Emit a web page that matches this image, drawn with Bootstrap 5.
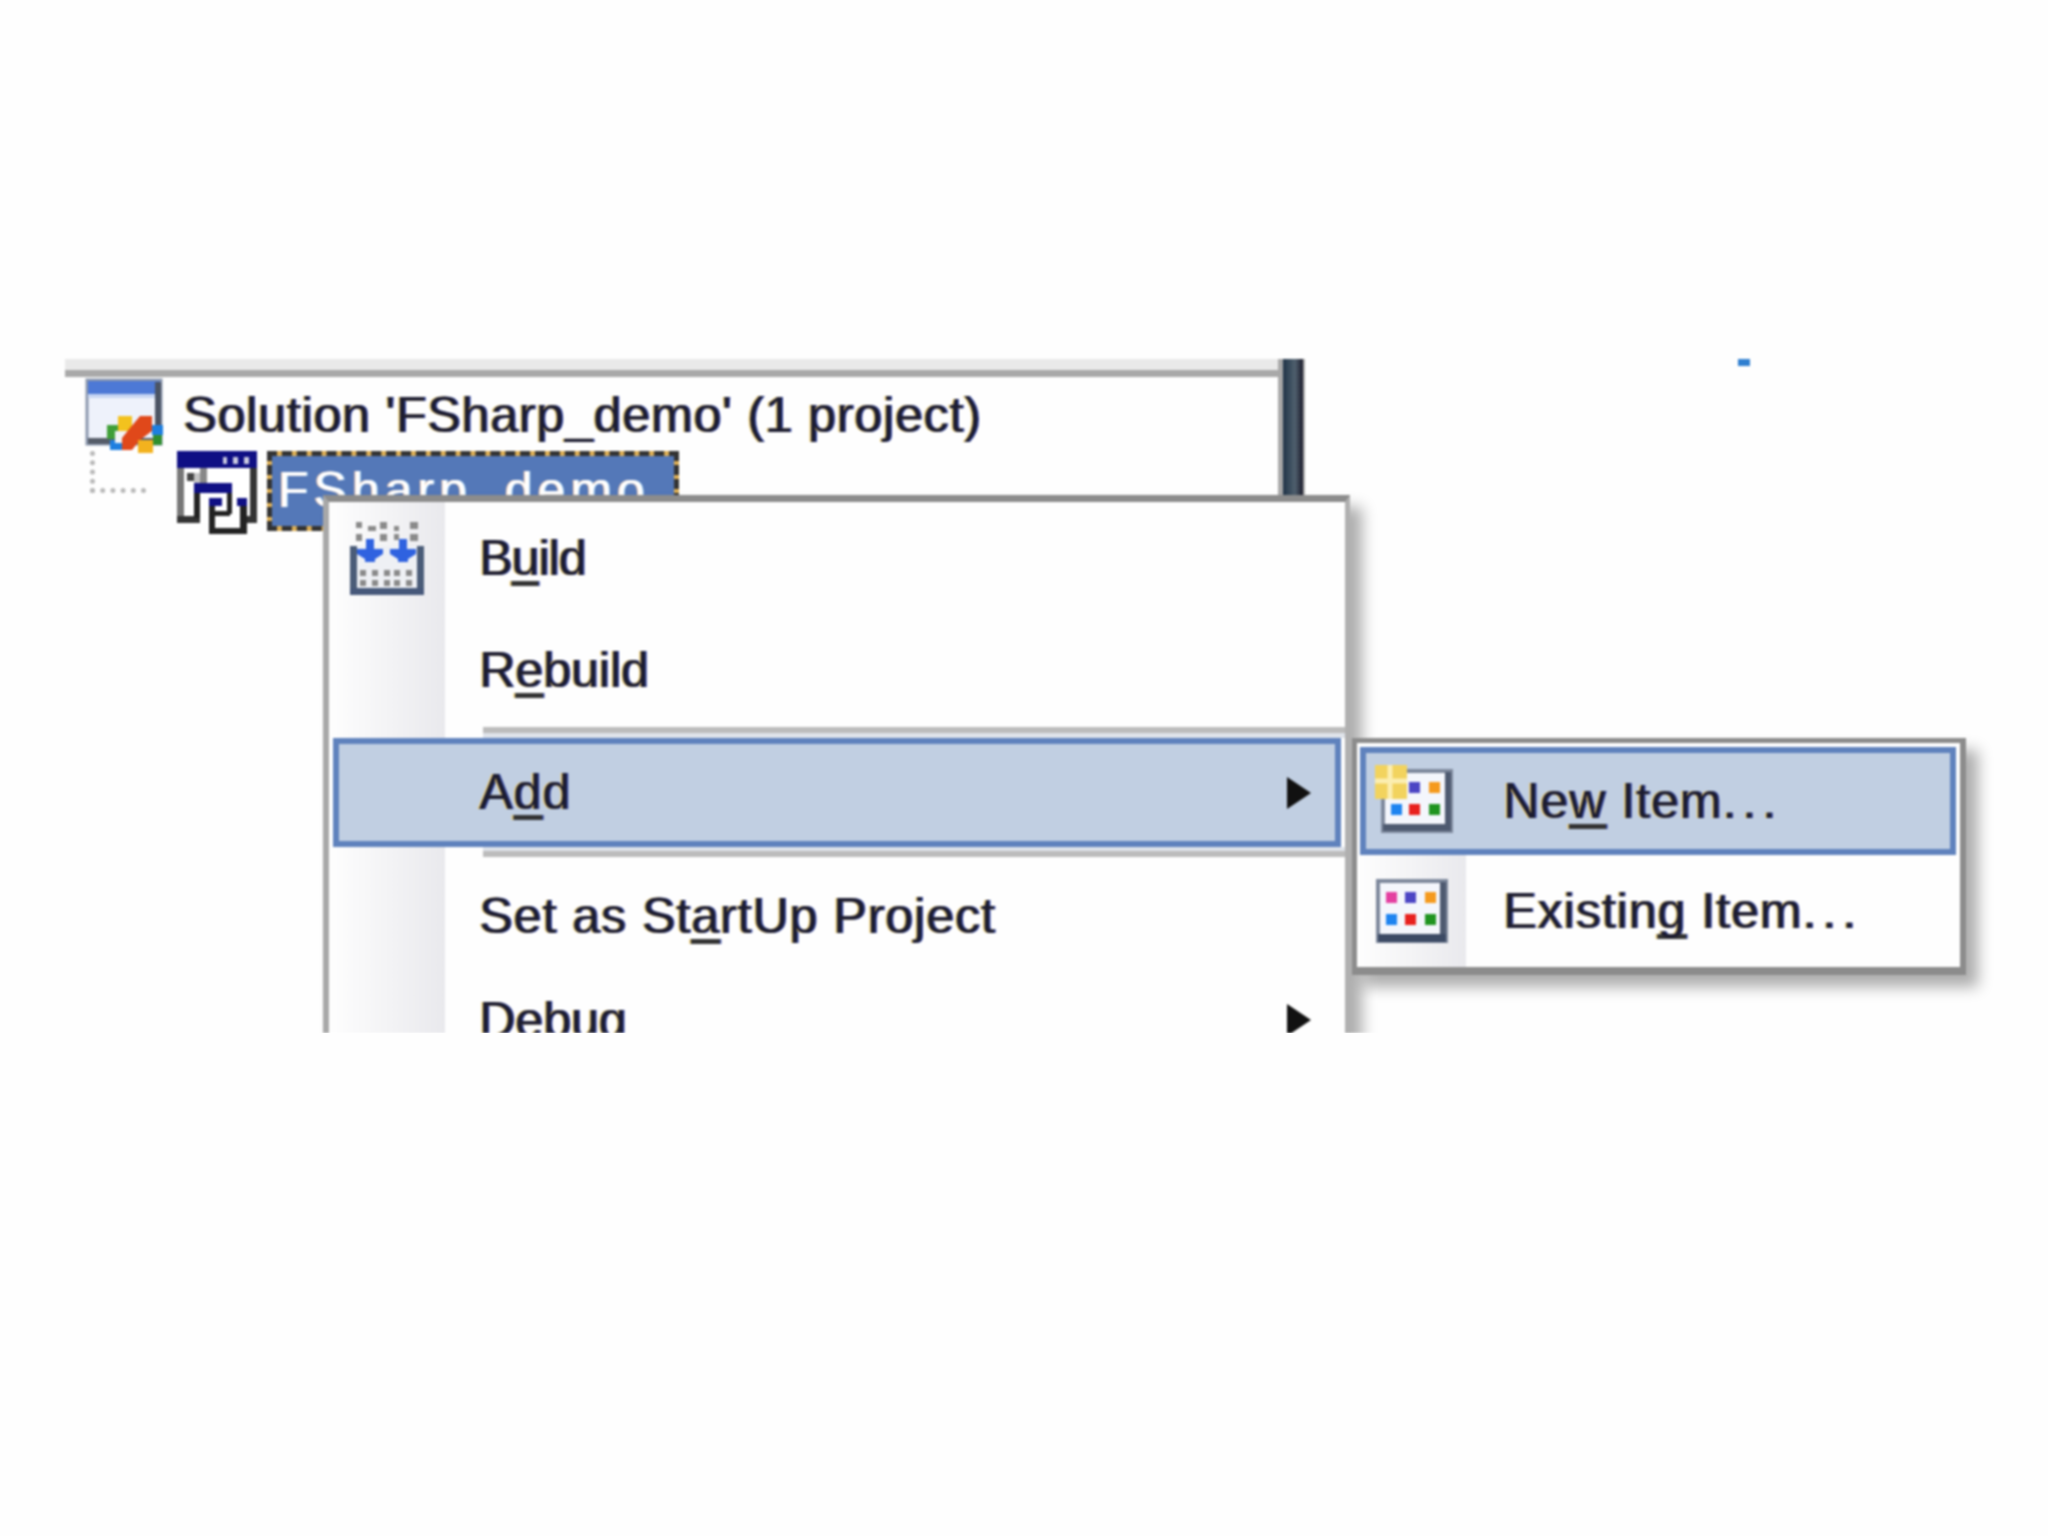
<!DOCTYPE html>
<html lang="en">
<head>
  <meta charset="UTF-8" />
  <title>Solution Explorer - Add New Item</title>
  <link href="https://cdn.jsdelivr.net/npm/bootstrap@5.3.0/dist/css/bootstrap.min.css" rel="stylesheet">
  <script src="https://cdn.jsdelivr.net/npm/bootstrap@5.3.0/dist/js/bootstrap.bundle.min.js"></script>
  <style>
    body {
      background-color: #fefefe;
      overflow: hidden;
    }
    .shot {
      position: relative;
      width: 2048px;
      height: 674px;
      margin-top: 359px;
      overflow: hidden;
      filter: blur(0.9px);
      font-family: "Liberation Sans", Arial, sans-serif;
      font-size: 50px;
      color: #1c1c30;
      text-shadow: -1.5px 0 #e8c76a, 1.5px 0 #2b3f9c;
    }
    .top-rule {
      width: 1213px;
      height: 18px;
      margin-left: 65px;
      background-color: #e9e9e9;
      border-bottom: 7px solid #a9a9a9;
    }
    .splitter {
      position: absolute;
      left: 1278px;
      top: 0;
      width: 27px;
      height: 140px;
      background: linear-gradient(90deg, #1f3347, #50606e 60%, #1a1a2a);
      border-left: 5px solid #a8a8a8;
      border-right: 2px solid #aaa;
    }
    .blue-dot {
      position: absolute;
      left: 1738px;
      top: 0;
      width: 12px;
      height: 7px;
      background-color: #2f7fd0;
    }
    .solution-row {
      padding-left: 85px;
      padding-top: 3px;
      gap: 20px;
      height: 74px;
      letter-spacing: 0.85px;
    }
    .project-row {
      padding-left: 90px;
      height: 90px;
    }
    .tree-line {
      width: 56px;
      height: 42px;
      margin-right: 31px;
      border-left: 5px dotted #b8b8b8;
      border-bottom: 5px dotted #b8b8b8;
    }
    .project-sel {
      width: 412px;
      height: 80px;
      margin-left: 10px;
      padding: 4px 6px;
      line-height: 60px;
      background: linear-gradient(#5478b8, #5478b8) padding-box, linear-gradient(#dcae55, #dcae55) border-box;
      border: 5px dashed #333;
      color: #fff;
      text-shadow: -1px 0 #f4c8a8, 1px 0 #a8d4f4;
      letter-spacing: 5px;
      white-space: nowrap;
    }
    .ctx-menu.dropdown-menu {
      --bs-dropdown-bg: #fefefe;
      --bs-dropdown-padding-y: 0;
      --bs-dropdown-border-width: 0;
      --bs-dropdown-border-radius: 0;
      --bs-dropdown-font-size: 50px;
      --bs-dropdown-color: #1c1c30;
      --bs-dropdown-min-width: 0;
      display: block;
      margin: 0;
      font-family: inherit;
      text-shadow: inherit;
      border-radius: 0;
      border-style: solid;
      border-color: #8c8c8c;
      box-shadow: 12px 12px 14px rgba(0, 0, 0, 0.32);
    }
    .main-menu {
      left: 323px;
      top: 136px;
      width: 1027px;
      height: 640px;
      border-width: 7px 5px 0 6px;
      border-color: #8c8c8c #b0b0b0 #8c8c8c #a8a8a8 !important;
    }
    .sub-menu {
      left: 1352px;
      top: 379px;
      width: 614px;
      height: 237px;
      border-width: 5px 6px 8px 5px;
      padding-top: 4px !important;
    }
    .menu-row {
      display: flex;
      align-items: center;
      width: auto;
      padding: 0;
      color: #1c1c30;
      background-color: transparent;
      white-space: nowrap;
      letter-spacing: 1px;
    }
    .menu-row:hover {
      color: #1c1c30;
      background-color: transparent;
    }
    .gutter {
      flex: 0 0 auto;
      display: flex;
      align-items: center;
      justify-content: center;
      align-self: stretch;
      background: linear-gradient(90deg, #fefefe, #e9e9ed);
    }
    .main-menu .gutter {
      width: 116px;
    }
    .sub-menu .gutter {
      width: 109px;
    }
    .main-menu .menu-label {
      padding-left: 34px;
      flex-grow: 1;
    }
    .sub-menu .menu-label {
      padding-left: 37px;
      flex-grow: 1;
    }
    .row-a { height: 112px; }
    .row-b { height: 113px; }
    .row-c { height: 118px; }
    .row-d { height: 90px; }
    .row-d .sub-arrow { margin-right: 34px; }
    .snug { letter-spacing: 0; }
    .snugger { letter-spacing: -1px; }
    .menu-row u {
      text-decoration-thickness: 5px;
      text-underline-offset: 6px;
      text-decoration-skip-ink: none;
      text-decoration-color: #333;
    }
    .is-hot {
      margin: 0 4px 0 4px;
      height: 109px;
      background-color: #c1cfe2;
      border: 6px solid #5f82bd;
    }
    .is-hot .gutter {
      background: none;
    }
    .main-menu .is-hot .gutter {
      width: 106px;
    }
    .sub-hot {
      margin: 0 4px 0 3px;
      height: 108px;
    }
    .sub-hot .gutter {
      width: 100px !important;
    }
    .sub-plain {
      height: 112px;
    }
    .menu-rule {
      margin-left: 38px;
    }
    .rule-over {
      height: 11px;
      background-color: #dfe3ea;
      border-top: 6px solid #bcbcbc;
    }
    .rule-under {
      height: 10px;
      background-color: #dfe3ea;
      border-bottom: 6px solid #bcbcbc;
    }
    .sub-arrow {
      flex: 0 0 auto;
      width: 0;
      height: 0;
      margin-right: 24px;
      border-style: solid;
      border-width: 16px 0 16px 24px;
      border-color: transparent transparent transparent #111;
    }
    .shot svg {
      display: block;
      flex: 0 0 auto;
      overflow: visible;
    }
    .ell {
      letter-spacing: 6px;
    }
  </style>
</head>
<body>
  <div class="shot">
    <div class="top-rule"></div>
    <div class="splitter"></div>
    <div class="blue-dot"></div>

    <!-- tree -->
    <div class="d-flex align-items-center solution-row">
      <svg width="78" height="76" viewBox="0 0 78 76">
        <rect x="2" y="2" width="74" height="64" fill="#eef2fb" stroke="#8b97ad" stroke-width="3"/>
        <rect x="3" y="3" width="72" height="14" fill="#4d79d6"/>
        <rect x="3" y="16" width="72" height="4" fill="#c7d6f2"/>
        <rect x="3" y="60" width="72" height="6" fill="#555c68"/>
        <rect x="70" y="4" width="6" height="60" fill="#4b5464"/>
        <rect x="22" y="47" width="12" height="14" fill="#3f9f38"/>
        <rect x="33" y="38" width="14" height="15" fill="#f3c21e"/>
        <rect x="25" y="62" width="12" height="10" fill="#1e7fe0"/>
        <rect x="30" y="53" width="10" height="12" fill="#f2f4f6"/>
        <path d="M55 38H67V53L55 62 47 72H37V60L45 50Z" fill="#e0481a"/>
        <rect x="53" y="62" width="15" height="13" fill="#f3b21e"/>
        <rect x="67" y="47" width="11" height="10" fill="#1e7fe0"/>
        <rect x="68" y="57" width="9" height="10" fill="#2f8f2f"/>
      </svg>
      <span class="text-nowrap">Solution 'FSharp_demo' (1 project)</span>
    </div>
    <div class="d-flex align-items-start project-row">
      <div class="tree-line"></div>
      <svg width="80" height="84" viewBox="0 0 80 84">
        <rect x="0" y="0" width="80" height="72" fill="#fff"/>
        <rect x="0" y="0" width="80" height="17" fill="#0f0f84"/>
        <rect x="46" y="6" width="4" height="7" fill="#c8c8e0"/>
        <rect x="56" y="6" width="5" height="7" fill="#c8c8e0"/>
        <rect x="67" y="6" width="5" height="7" fill="#c8c8e0"/>
        <rect x="0" y="17" width="7" height="55" fill="#777"/>
        <rect x="73" y="17" width="7" height="55" fill="#333"/>
        <rect x="0" y="65" width="23" height="7" fill="#333"/>
        <rect x="70" y="65" width="10" height="7" fill="#333"/>
        <rect x="10" y="22" width="7" height="8" fill="#444"/>
        <rect x="17" y="22" width="6" height="40" fill="#c4c4c4"/>
        <rect x="23" y="17" width="7" height="15" fill="#888"/>
        <rect x="17" y="32" width="6" height="35" fill="#222"/>
        <rect x="50" y="32" width="5" height="31" fill="#222"/>
        <rect x="17" y="32" width="38" height="10" fill="#0f0f84"/>
        <rect x="38" y="60" width="15" height="5" fill="#222"/>
        <rect x="32" y="47" width="6" height="36" fill="#222"/>
        <rect x="63" y="47" width="7" height="36" fill="#222"/>
        <rect x="32" y="77" width="38" height="6" fill="#222"/>
        <rect x="32" y="47" width="13" height="8" fill="#0f0f84"/>
        <rect x="60" y="47" width="10" height="8" fill="#0f0f84"/>
      </svg>
      <div class="project-sel">FSharp_demo</div>
    </div>

    <!-- context menu -->
    <div class="dropdown-menu show ctx-menu main-menu">
      <a class="dropdown-item menu-row row-a">
        <span class="gutter">
          <svg width="74" height="76" viewBox="0 0 74 76">
            <rect x="2" y="26" width="70" height="46" fill="#eef0f4"/>
            <rect x="0" y="26" width="7" height="48" fill="#4a5c78"/>
            <rect x="67" y="26" width="7" height="48" fill="#4a5c78"/>
            <rect x="0" y="68" width="74" height="7" fill="#46587a"/>
            <g fill="#8a8a8a">
              <rect x="6" y="2" width="6" height="6"/><rect x="18" y="6" width="8" height="5"/><rect x="30" y="2" width="7" height="7"/><rect x="44" y="6" width="5" height="5"/><rect x="60" y="2" width="8" height="7"/>
              <rect x="6" y="14" width="6" height="7"/><rect x="30" y="14" width="7" height="7"/><rect x="44" y="14" width="5" height="6"/><rect x="60" y="14" width="8" height="7"/>
              <rect x="10" y="50" width="6" height="6"/><rect x="22" y="50" width="6" height="6"/><rect x="34" y="50" width="6" height="6"/><rect x="44" y="50" width="6" height="6"/><rect x="56" y="50" width="6" height="6"/>
              <rect x="10" y="60" width="6" height="6"/><rect x="22" y="60" width="6" height="6"/><rect x="34" y="60" width="6" height="6"/><rect x="44" y="60" width="6" height="6"/><rect x="56" y="60" width="6" height="6"/>
            </g>
            <path d="M16 19h8v10h9v5l-8 5v3h-10v-3l-8-5v-5h9zM49 19h8v10h9v5l-8 5v3h-10v-3l-8-5v-5h9z" fill="#2f62e0"/>
          </svg>
        </span>
        <span class="menu-label snugger">B<u>u</u>ild</span>
      </a>
      <a class="dropdown-item menu-row row-b">
        <span class="gutter"></span>
        <span class="menu-label snug">R<u>e</u>build</span>
      </a>
      <div class="d-flex">
        <span class="gutter"></span>
        <div class="menu-rule rule-over flex-grow-1"></div>
      </div>
      <a class="dropdown-item menu-row is-hot">
        <span class="gutter"></span>
        <span class="menu-label">A<u>d</u>d</span>
        <span class="sub-arrow"></span>
      </a>
      <div class="d-flex">
        <span class="gutter"></span>
        <div class="menu-rule rule-under flex-grow-1"></div>
      </div>
      <a class="dropdown-item menu-row row-c">
        <span class="gutter"></span>
        <span class="menu-label">Set as St<u>a</u>rtUp Project</span>
      </a>
      <a class="dropdown-item menu-row row-d">
        <span class="gutter"></span>
        <span class="menu-label snug">Debug</span>
        <span class="sub-arrow"></span>
      </a>
    </div>

    <!-- Add submenu -->
    <div class="dropdown-menu show ctx-menu sub-menu">
      <a class="dropdown-item menu-row is-hot sub-hot">
        <span class="gutter">
          <svg width="74" height="66" viewBox="0 0 74 66">
            <rect x="4" y="3" width="68" height="60" fill="#f4f6fc" stroke="#7d889c" stroke-width="4"/>
            <rect x="66" y="4" width="6" height="58" fill="#4e5a70"/>
            <rect x="4" y="56" width="68" height="7" fill="#4e5a70"/>
            <rect x="30" y="14" width="11" height="11" fill="#4c45c4"/><rect x="50" y="14" width="11" height="11" fill="#f59a1e"/>
            <rect x="12" y="36" width="11" height="11" fill="#1e84f0"/><rect x="30" y="36" width="11" height="11" fill="#e8201e"/><rect x="50" y="36" width="11" height="11" fill="#1f9420"/>
            <rect x="-4" y="-3" width="32" height="34" fill="#f2d35e"/>
            <path d="M11-3v34M-4 13h32" stroke="#fbeeb0" stroke-width="5"/>
          </svg>
        </span>
        <span class="menu-label">Ne<u>w</u> Item<span class="ell">...</span></span>
      </a>
      <a class="dropdown-item menu-row sub-plain">
        <span class="gutter">
          <svg width="74" height="66" viewBox="0 0 74 66">
            <rect x="3" y="3" width="68" height="60" fill="#f4f6fc" stroke="#7d889c" stroke-width="4"/>
            <rect x="65" y="4" width="6" height="58" fill="#4e5a70"/>
            <rect x="3" y="56" width="68" height="8" fill="#3c4a64"/>
            <rect x="11" y="14" width="11" height="11" fill="#e43fa0"/><rect x="30" y="14" width="11" height="11" fill="#4c45c4"/><rect x="50" y="14" width="11" height="11" fill="#f59a1e"/>
            <rect x="11" y="36" width="11" height="11" fill="#1e84f0"/><rect x="30" y="36" width="11" height="11" fill="#e8201e"/><rect x="50" y="36" width="11" height="11" fill="#1f9420"/>
          </svg>
        </span>
        <span class="menu-label">Existin<u>g</u> Item<span class="ell">...</span></span>
      </a>
    </div>
  </div>
</body>
</html>
